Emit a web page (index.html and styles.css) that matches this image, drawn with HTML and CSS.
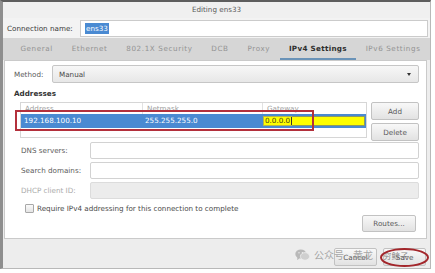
FILE: index.html
```html
<!DOCTYPE html>
<html lang="en">
<head>
    <meta charset="UTF-8">
    <meta name="viewport" content="width=device-width, initial-scale=1.0">
    <link rel="stylesheet" href="styles.css">
    <title>Editing ens33</title>
</head>
<body>
    <div class="window">
        <div class="titlebar">Editing ens33</div>

        <div class="name-row">
            <label class="name-label">Connection name:</label>
            <div class="entry"><span class="selected-text">ens33</span></div>
        </div>

        <div class="tabs">
            <span class="tab">General</span>
            <span class="tab">Ethernet</span>
            <span class="tab">802.1X Security</span>
            <span class="tab">DCB</span>
            <span class="tab">Proxy</span>
            <span class="tab active">IPv4 Settings</span>
            <span class="tab">IPv6 Settings</span>
        </div>

        <div class="page">
            <div class="method-row">
                <span class="method-label">Method:</span>
                <div class="combo">
                    <span>Manual</span>
                    <span class="arrow"></span>
                </div>
            </div>

            <div class="section-title">Addresses</div>

            <div class="addr-block">
                <div class="table">
                    <div class="thead">
                        <span class="col">Address</span>
                        <span class="col">Netmask</span>
                        <span class="col">Gateway</span>
                    </div>
                    <div class="trow selected">
                        <span class="col">192.168.100.10</span>
                        <span class="col">255.255.255.0</span>
                        <span class="col edit-col"><span class="cell-entry"><span class="typed">0.0.0.0</span><span class="caret"></span></span></span>
                    </div>
                    <!-- annotation box drawn over the row -->
                    <div class="mark-box"></div>
                </div>
                <div class="side-buttons">
                    <button class="btn">Add</button>
                    <button class="btn">Delete</button>
                </div>
            </div>

            <div class="fields">
                <label>DNS servers:</label>
                <div class="input"></div>
                <label>Search domains:</label>
                <div class="input"></div>
                <label class="disabled">DHCP client ID:</label>
                <div class="input off"></div>
            </div>

            <div class="check-row">
                <span class="checkbox"></span>
                <span>Require IPv4 addressing for this connection to complete</span>
            </div>

            <div class="routes-row">
                <button class="btn routes">Routes...</button>
            </div>
        </div>

        <div class="footer">
            <button class="btn foot-btn">Cancel</button>
            <button class="btn foot-btn">Save</button>
        </div>

        <!-- watermark and annotation on top of the footer -->
        <div class="watermark">
            <svg class="wx" width="15" height="12" viewBox="0 0 15 12">
                <ellipse cx="5.8" cy="5" rx="5.5" ry="4.6" fill="#b9b9b9"/>
                <path d="M2.5 8.6 L2 11 L4.6 9.4 Z" fill="#b9b9b9"/>
                <ellipse cx="10" cy="7.4" rx="4.6" ry="3.8" fill="#cfcfcf" stroke="#ededed" stroke-width="0.8"/>
                <circle cx="4" cy="3.8" r="0.7" fill="#ededed"/>
                <circle cx="7.4" cy="3.8" r="0.7" fill="#ededed"/>
            </svg>
            <span class="wm-text">公众号</span>
            <span class="wm-text wm-mid">黄龙</span>
            <span class="wm-text wm-end">穷鲸子</span>
        </div>
        <div class="mark-ring"></div>
    </div>
</body>
</html>
```

FILE: styles.css
```css
body {
    margin: 0;
    background-color: #fff;
    font-family: "DejaVu Sans", sans-serif;
    font-size: 7.2px;
    color: #4a4a4a;
}

.window {
    position: relative;
    width: 427px;
    height: 266px;
    background-color: #ededed;
    border-top: 2px solid #5e5e5e;
    border-left: 3px solid #8e8e8e;
    border-right: 1px solid #b8b8b8;
    border-bottom: 1px solid #b8b8b8;
    display: flex;
    flex-direction: column;
}

.titlebar {
    height: 16px;
    line-height: 16px;
    text-align: center;
    color: #5a5a5a;
    background-color: #f0f0f0;
}

.name-row {
    height: 20px;
    display: flex;
    align-items: center;
    padding-left: 4px;
    background-color: #f3f3f3;
}

.name-label {
    width: 73px;
    color: #3a3a3a;
}

.entry {
    flex: 1;
    height: 17px;
    margin-right: 2px;
    box-sizing: border-box;
    background-color: #fff;
    border: 1px solid #cbcbcb;
    display: flex;
    align-items: center;
}

.selected-text {
    margin-left: 4px;
    padding: 1px 1px;
    background-color: #4a8ad2;
    color: #fff;
}

.tabs {
    height: 22px;
    display: flex;
    padding-left: 8px;
    background-color: #d6d6d6;
}

.tab {
    padding: 0 9.4px;
    display: flex;
    align-items: center;
    color: #939393;
    letter-spacing: 0.6px;
    box-sizing: border-box;
    border-bottom: 2px solid transparent;
}

.tab.active {
    color: #2e2e2e;
    font-weight: bold;
    letter-spacing: 0.3px;
    border-bottom-color: #6a93b8;
}

.page {
    height: 179px;
    box-sizing: border-box;
    margin: 0 3px 0 1px;
    padding: 4px 7px 0 9px;
    background-color: #fff;
    border: 1px solid #cacaca;
}

.method-row {
    height: 18px;
    display: flex;
    align-items: center;
}

.method-label {
    width: 38px;
    color: #5a5a5a;
}

.combo {
    flex: 1;
    height: 18px;
    box-sizing: border-box;
    padding: 0 7px 0 6px;
    border: 1px solid #c6c6c6;
    border-radius: 2px;
    background: linear-gradient(#f7f7f7, #e7e7e7);
    display: flex;
    justify-content: space-between;
    align-items: center;
    color: #4a4a4a;
}

.arrow {
    width: 0;
    height: 0;
    border-left: 2.5px solid transparent;
    border-right: 2.5px solid transparent;
    border-top: 3px solid #333;
}

.section-title {
    margin-top: 6px;
    height: 10px;
    line-height: 10px;
    font-weight: bold;
    color: #333;
}

.addr-block {
    margin-top: 3px;
    margin-left: 6px;
    display: flex;
    gap: 4px;
}

.table {
    position: relative;
    width: 347px;
    height: 36px;
    box-sizing: border-box;
    border: 1px solid #d6d6d6;
}

.thead,
.trow {
    display: grid;
    grid-template-columns: 121px 120px 1fr;
}

.thead {
    height: 11px;
    line-height: 11px;
    color: #a0a0a0;
}

.thead .col {
    padding-left: 4px;
}

.thead .col + .col {
    border-left: 1px solid #e2e2e2;
}

.trow {
    height: 14px;
    line-height: 14px;
}

.trow .col {
    padding-left: 3px;
}

.trow.selected {
    background-color: #4a8ad2;
    color: #fff;
}

.trow .edit-col {
    padding: 2px 1px 2px 1px;
    display: flex;
}

.cell-entry {
    flex: 1;
    display: flex;
    align-items: center;
    background-color: #ffff00;
    border: 1px solid #8c9a62;
}

.typed {
    padding: 0 1px;
    color: #3a3a1a;
    line-height: 8px;
    outline: 1px solid #b5b54a;
}

.caret {
    width: 1px;
    height: 8px;
    background-color: #333;
}

.mark-box {
    position: absolute;
    left: -6px;
    top: 7px;
    width: 299px;
    height: 21px;
    box-sizing: border-box;
    border: 2px solid #b3303c;
}

.side-buttons {
    width: 48px;
    display: flex;
    flex-direction: column;
    gap: 3px;
}

.btn {
    height: 18px;
    padding: 0;
    font-family: "DejaVu Sans", sans-serif;
    font-size: 7.2px;
    color: #5a5a5a;
    background: linear-gradient(#f8f8f8, #e2e2e2);
    border: 1px solid #c2c2c2;
    border-radius: 2px;
}

.fields {
    margin-top: 1px;
    margin-left: 7px;
    display: grid;
    grid-template-columns: 69px 1fr;
    grid-auto-rows: 17px;
    row-gap: 3px;
    align-items: center;
}

.fields label {
    color: #5a5a5a;
}

.fields label.disabled {
    color: #ababab;
}

.input {
    height: 17px;
    box-sizing: border-box;
    background-color: #fff;
    border: 1px solid #d2d2d2;
    border-radius: 2px;
}

.input.off {
    background-color: #ececec;
    border-color: #dcdcdc;
}

.check-row {
    margin-top: 4px;
    margin-left: 11px;
    height: 10px;
    display: flex;
    align-items: center;
    gap: 3px;
    color: #4a4a4a;
}

.checkbox {
    width: 9px;
    height: 9px;
    box-sizing: border-box;
    border: 1px solid #a8a8a8;
    border-radius: 1px;
    background: linear-gradient(#fafafa, #e4e4e4);
}

.routes-row {
    margin-top: 2px;
    padding-right: 3px;
    display: flex;
    justify-content: flex-end;
}

.routes {
    width: 54px;
    height: 17px;
}

.footer {
    flex: 1;
    display: flex;
    justify-content: flex-end;
    align-items: flex-start;
    gap: 6px;
    padding: 9px 4px 0 0;
}

.foot-btn {
    width: 43px;
}

.watermark {
    position: absolute;
    left: 292px;
    top: 246px;
    display: flex;
    align-items: center;
    color: rgba(140, 140, 140, 0.75);
    font-family: "Noto Sans CJK SC", sans-serif;
    font-size: 10px;
    line-height: 14px;
}

.wx {
    margin-right: 4px;
}

.wm-mid {
    margin-left: 9px;
}

.wm-end {
    margin-left: 10px;
    font-size: 8.5px;
    color: rgba(110, 110, 110, 0.8);
}

.mark-ring {
    position: absolute;
    left: 377px;
    top: 246px;
    width: 49px;
    height: 19px;
    box-sizing: border-box;
    border: 2px solid #a3262b;
    border-radius: 50%;
}
```
